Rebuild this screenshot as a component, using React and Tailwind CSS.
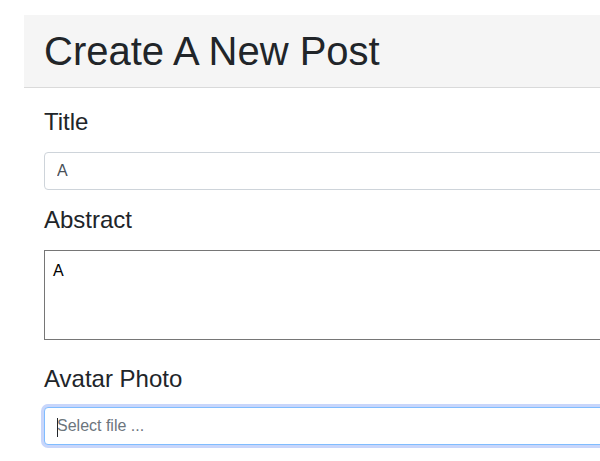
export default function App() {
  return (
    <div className="min-h-screen w-full overflow-hidden bg-white font-['Liberation_Sans',Arial,sans-serif] text-[#212529]">
      <div className="pt-[15px] pl-6">
        <div className="w-[900px]">
          {/* card header */}
          <div className="border-b border-[#dadada] bg-[#f5f5f5] px-5 py-3">
            <h1 className="text-[40px] leading-[1.2]">Create A New Post</h1>
          </div>

          <form className="p-5">
            <div className="mb-4">
              <label className="mb-[15px] block text-2xl leading-[1.2]">Title</label>
              <input
                type="text"
                defaultValue="A"
                className="block h-[38px] w-full rounded border border-[#ced4da] bg-white px-3 text-base text-[#495057] outline-none"
              />
            </div>

            <div className="mb-[25px]">
              <label className="mb-[15px] block text-2xl leading-[1.2]">Abstract</label>
              <textarea
                defaultValue="A"
                className="block h-[90px] w-full resize-none border border-[#767676] bg-white px-2 pt-[11px] font-['Liberation_Sans',Arial,sans-serif] text-[16px] leading-[1.15] text-black outline-none"
              />
            </div>

            <div>
              <label className="mb-[14px] block text-2xl leading-[1.2]">Avatar Photo</label>
              <div className="relative">
                <input
                  type="text"
                  readOnly
                  placeholder="Select file ..."
                  className="block h-[38px] w-full rounded border border-[#80bdff] bg-white px-3 text-base text-[#495057] shadow-[0_0_0_3px_#c8d6fb] outline-none placeholder:text-[#6c757d]"
                />
                {/* caret */}
                <span className="absolute left-[13px] top-[11px] h-[19px] w-px bg-[#212529]" />
              </div>
            </div>
          </form>
        </div>
      </div>
    </div>
  );
}
